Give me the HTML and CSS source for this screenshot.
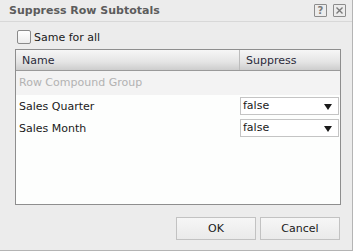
FILE: index.html
```html
<!DOCTYPE html>
<html lang="en">
<head>
    <meta charset="UTF-8">
    <title>Suppress Row Subtotals</title>
    <link rel="stylesheet" href="styles.css">
</head>
<body>
    <div class="dialog">
        <div class="titlebar">
            <h1>Suppress Row Subtotals</h1>
            <div class="tools">
                <span class="tool">?</span>
                <span class="tool">
                    <svg width="9" height="9" viewBox="0 0 9 9"><path d="M1.5 1.5L7.5 7.5M7.5 1.5L1.5 7.5" stroke="#7a7a7a" stroke-width="1.4"/></svg>
                </span>
            </div>
        </div>
        <div class="body">
            <label class="same">
                <span class="checkbox"></span>
                <span>Same for all</span>
            </label>
            <div class="grid">
                <div class="grid-head">
                    <div class="col-name">Name</div>
                    <div class="col-sup">Suppress</div>
                </div>
                <div class="group-row">Row Compound Group</div>
                <div class="row">
                    <div class="col-name">Sales Quarter</div>
                    <div class="col-sup"><div class="select">false<span class="arrow"></span></div></div>
                </div>
                <div class="row">
                    <div class="col-name">Sales Month</div>
                    <div class="col-sup"><div class="select">false<span class="arrow"></span></div></div>
                </div>
            </div>
            <div class="buttons">
                <button>OK</button>
                <button>Cancel</button>
            </div>
        </div>
    </div>
</body>
</html>
```

FILE: styles.css
```css
body {
    margin: 0;
    padding: 0;
    background-color: #ececec;
    font-family: "DejaVu Sans", Verdana, sans-serif;
    font-size: 11px;
    color: #1a1a1a;
}
.dialog {
    width: 353px;
    height: 251px;
    box-sizing: border-box;
    border-right: 1px solid #b4b4b4;
    border-bottom: 1px solid #b4b4b4;
    background-color: #ececec;
}
.titlebar {
    height: 22px;
    box-sizing: border-box;
    border-bottom: 1px solid #d8d8d8;
    display: flex;
    align-items: center;
    justify-content: space-between;
    padding: 0 6px 0 9px;
}
.titlebar h1 {
    margin: 0;
    font-size: 11px;
    font-weight: bold;
    color: #5c5c5c;
}
.tools {
    display: flex;
    gap: 6px;
}
.tool {
    width: 11px;
    height: 11px;
    border: 1px solid #8c8c8c;
    border-radius: 1px;
    display: flex;
    align-items: center;
    justify-content: center;
    font-size: 10px;
    line-height: 1;
    color: #7a7a7a;
    font-weight: bold;
}
.body {
    padding: 8px 12px 0 15px;
}
.same {
    display: flex;
    align-items: center;
    gap: 3px;
    height: 14px;
    padding-left: 2px;
    font-size: 11px;
}
.checkbox {
    width: 12px;
    height: 12px;
    border: 1px solid #8a8a8a;
    border-radius: 2px;
    background: linear-gradient(#ffffff, #ededed);
}
.grid {
    margin-top: 5px;
    width: 326px;
    height: 156px;
    box-sizing: border-box;
    border: 1px solid #8e8e8e;
    background-color: #fdfefd;
}
.grid-head {
    display: flex;
    height: 21px;
    box-sizing: border-box;
    border-bottom: 1px solid #9a9a9a;
    background: linear-gradient(#f6f6f6, #e4e4e4 60%, #cdcdcd);
    color: #2a2a3a;
}
.grid-head .col-name {
    border-right: 1px solid #bcbcbc;
}
.grid-head div {
    display: flex;
    align-items: center;
}
.col-name {
    width: 224px;
    padding-left: 6px;
    box-sizing: border-box;
}
.col-sup {
    flex: 1;
    padding-left: 6px;
}
.row .col-sup {
    padding-left: 0;
}
.group-row {
    height: 24px;
    line-height: 24px;
    padding-left: 3px;
    background-color: #f3f3f3;
    color: #b2b2b2;
}
.row {
    display: flex;
    align-items: center;
    height: 22px;
}
.row .col-name {
    padding-left: 3px;
}
.select {
    position: relative;
    height: 18px;
    width: 99px;
    box-sizing: border-box;
    border: 1px solid #c4c4c4;
    background-color: #ffffff;
    padding-left: 2px;
    line-height: 16px;
}
.arrow {
    position: absolute;
    right: 6px;
    top: 6px;
    border-left: 4px solid transparent;
    border-right: 4px solid transparent;
    border-top: 6px solid #1a1a1a;
}
.buttons {
    display: flex;
    justify-content: flex-end;
    gap: 4px;
    margin-top: 12px;
}
.buttons button {
    width: 80px;
    height: 23px;
    border: 1px solid #c2c2c2;
    background: linear-gradient(#f6f6f6, #eaeaea);
    font-family: inherit;
    font-size: 11px;
    color: #1a1a1a;
    padding: 0;
}
```
